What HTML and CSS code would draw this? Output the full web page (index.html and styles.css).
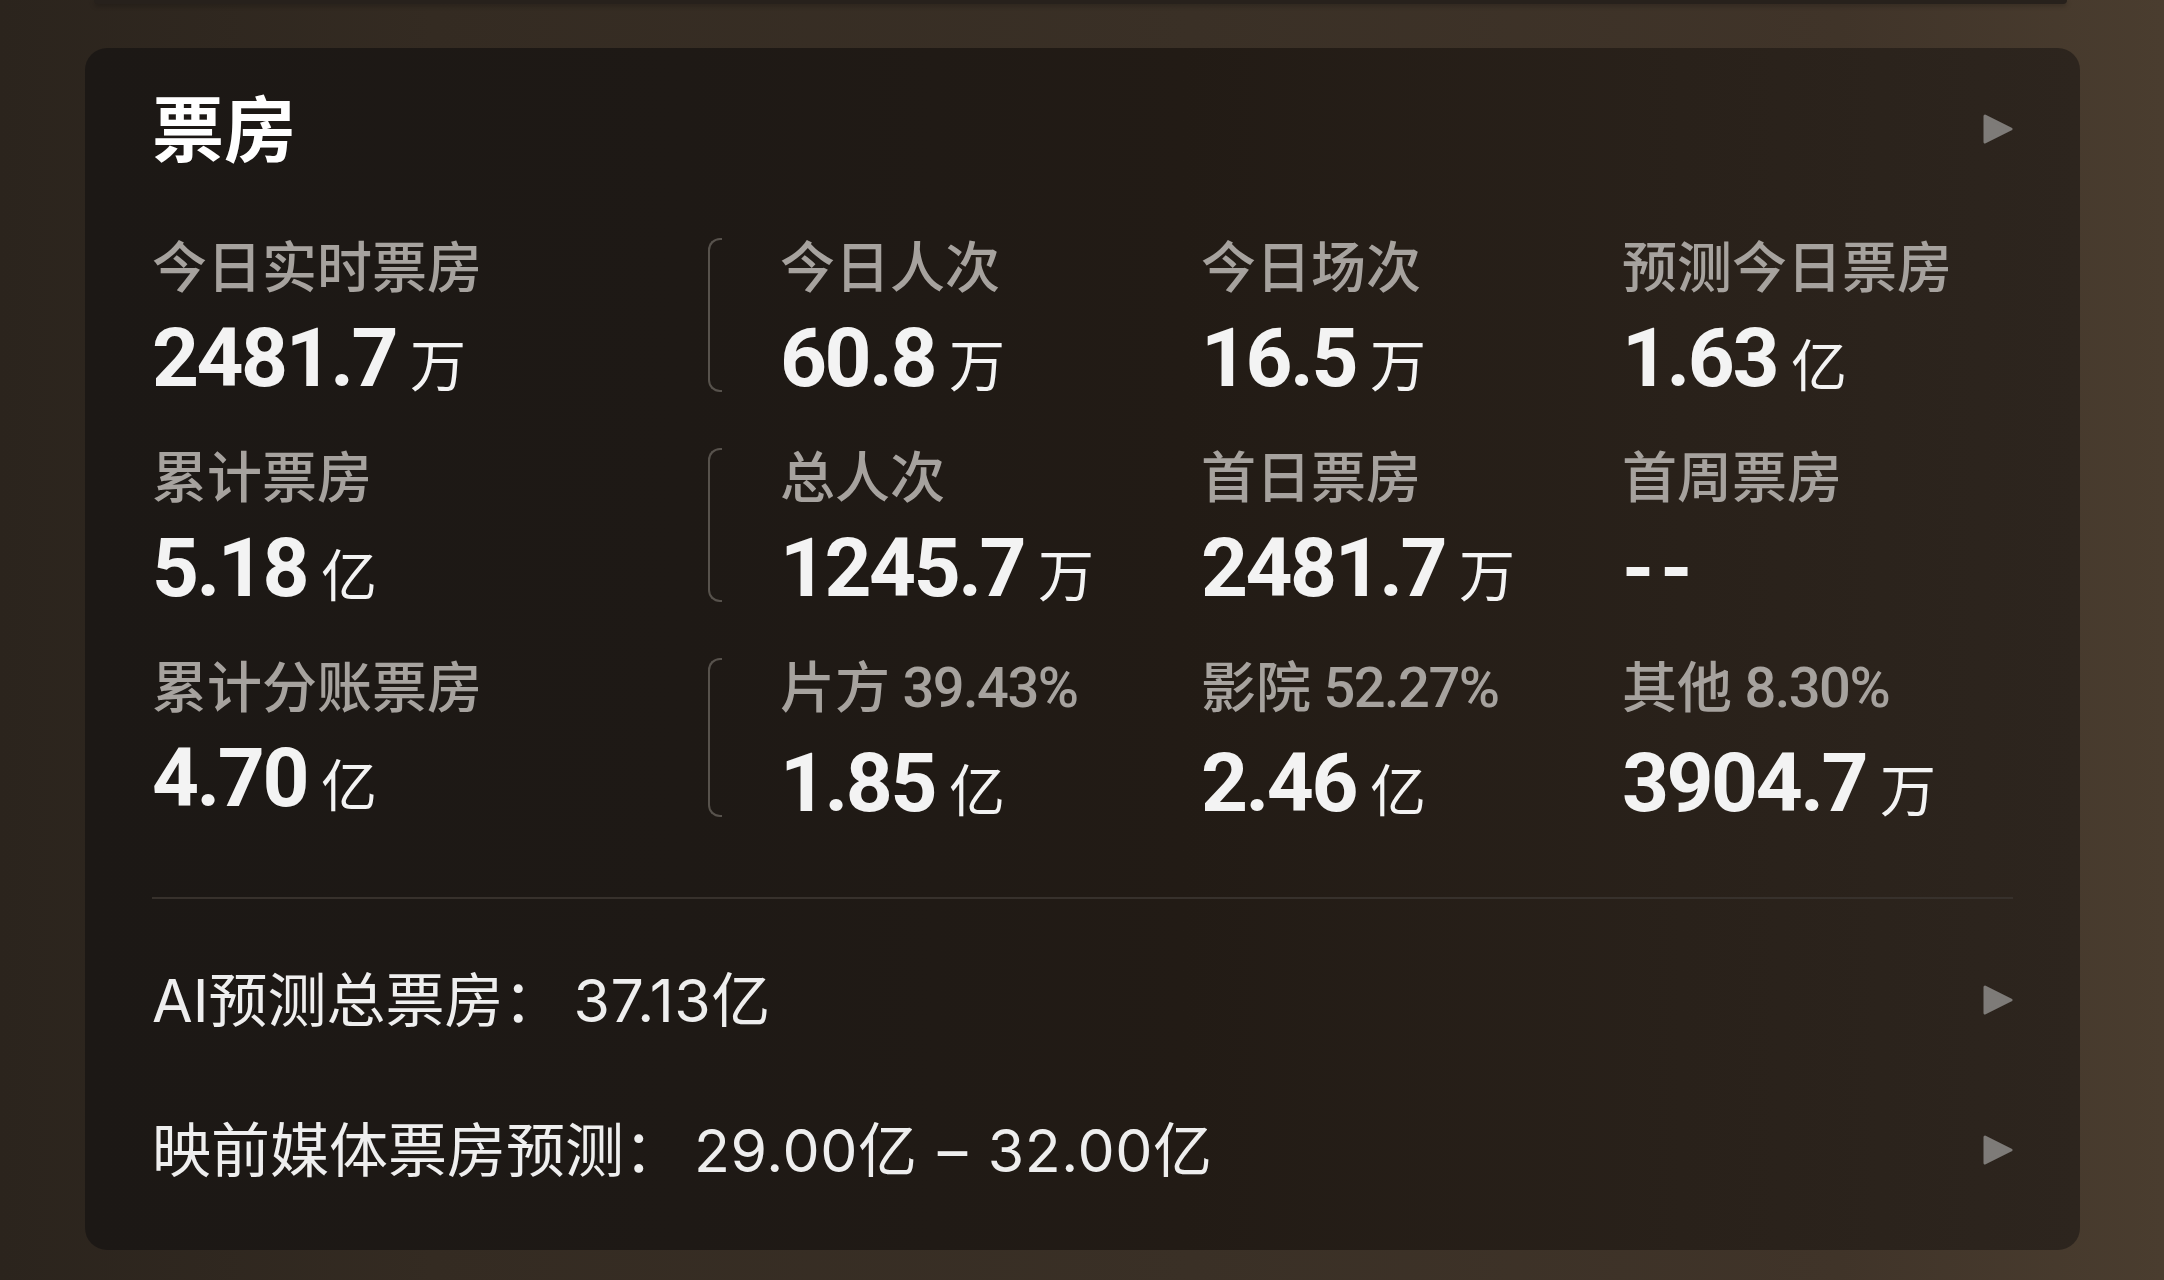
FILE: index.html
```html
<!DOCTYPE html>
<html lang="zh-CN">
<head>
<meta charset="utf-8">
<title>票房</title>
<link rel="stylesheet" href="styles.css">
</head>
<body>
<div class="page">
  <div class="prev-card"></div>

  <section class="card">
    <header class="card-head">
      <h2 class="card-title">票房</h2>
      <svg class="arrow arrow-head" viewBox="0 0 30 30" aria-hidden="true"><polygon points="2,2 28,15 2,28"/></svg>
    </header>

    <div class="stats">
      <div class="stat-row">
        <div class="stat">
          <div class="stat-label">今日实时票房</div>
          <div class="stat-value"><span class="num">2481.7</span><span class="unit">万</span></div>
        </div>
        <div class="stat-group">
          <div class="bracket"></div>
          <div class="stat">
            <div class="stat-label">今日人次</div>
            <div class="stat-value"><span class="num">60.8</span><span class="unit">万</span></div>
          </div>
          <div class="stat">
            <div class="stat-label">今日场次</div>
            <div class="stat-value"><span class="num">16.5</span><span class="unit">万</span></div>
          </div>
          <div class="stat">
            <div class="stat-label">预测今日票房</div>
            <div class="stat-value"><span class="num">1.63</span><span class="unit">亿</span></div>
          </div>
        </div>
      </div>

      <div class="stat-row">
        <div class="stat">
          <div class="stat-label">累计票房</div>
          <div class="stat-value"><span class="num">5.18</span><span class="unit">亿</span></div>
        </div>
        <div class="stat-group">
          <div class="bracket"></div>
          <div class="stat">
            <div class="stat-label">总人次</div>
            <div class="stat-value"><span class="num">1245.7</span><span class="unit">万</span></div>
          </div>
          <div class="stat">
            <div class="stat-label">首日票房</div>
            <div class="stat-value"><span class="num">2481.7</span><span class="unit">万</span></div>
          </div>
          <div class="stat">
            <div class="stat-label">首周票房</div>
            <div class="stat-value"><span class="num dash">--</span></div>
          </div>
        </div>
      </div>

      <div class="stat-row">
        <div class="stat">
          <div class="stat-label">累计分账票房</div>
          <div class="stat-value"><span class="num">4.70</span><span class="unit">亿</span></div>
        </div>
        <div class="stat-group">
          <div class="bracket"></div>
          <div class="stat">
            <div class="stat-label">片方 <span class="pct">39.43%</span></div>
            <div class="stat-value"><span class="num">1.85</span><span class="unit">亿</span></div>
          </div>
          <div class="stat">
            <div class="stat-label">影院 <span class="pct">52.27%</span></div>
            <div class="stat-value"><span class="num">2.46</span><span class="unit">亿</span></div>
          </div>
          <div class="stat">
            <div class="stat-label">其他 <span class="pct">8.30%</span></div>
            <div class="stat-value"><span class="num">3904.7</span><span class="unit">万</span></div>
          </div>
        </div>
      </div>
    </div>

    <div class="divider"></div>

    <div class="link-row">
      <span class="link-text">AI预测总票房：<span class="link-value">37.13亿</span></span>
      <svg class="arrow" viewBox="0 0 30 30" aria-hidden="true"><polygon points="2,2 28,15 2,28"/></svg>
    </div>
    <div class="link-row">
      <span class="link-text">映前媒体票房预测：<span class="link-value">29.00亿<span class="range-sep">–</span>32.00亿</span></span>
      <svg class="arrow" viewBox="0 0 30 30" aria-hidden="true"><polygon points="2,2 28,15 2,28"/></svg>
    </div>
  </section>
</div>
</body>
</html>
```

FILE: styles.css
```css
html, body {
  margin: 0;
  padding: 0;
}

body {
  height: 1280px;
  overflow: hidden;
  background: linear-gradient(90deg, #2b241d 0%, #342b22 20%, #3a3026 55%, #403429 85%, #4a3d2f 100%);
  font-family: "Noto Sans CJK SC", sans-serif;
  color: #f2f2f2;
}

.page {
  padding: 0 84px 0 85px;
}

/* bottom edge of the card above, scrolled mostly out of view */
.prev-card {
  height: 4px;
  margin: 0 13px 0 9px;
  background: #27211c;
  border-radius: 0 0 4px 4px;
  box-shadow: 0 2px 5px rgba(0, 0, 0, 0.25);
}

.card {
  margin-top: 44px;
  height: 1202px;
  box-sizing: border-box;
  padding: 40px 67px 26px 67px;
  border-radius: 22px;
  background: linear-gradient(90deg, #1c1815 0%, #1e1915 30%, #221b15 55%, #29211a 80%, #2d251e 100%);
}

.card-head {
  display: flex;
  justify-content: space-between;
  align-items: flex-start;
  height: 68px;
}

.card-title {
  margin: 1px 0 0 0;
  font-size: 72px;
  line-height: 1;
  font-weight: 700;
  color: #ffffff;
}

.arrow {
  width: 30px;
  height: 30px;
  flex: none;
}

.arrow polygon {
  fill: #7e7b78;
  stroke: #7e7b78;
  stroke-width: 3;
  stroke-linejoin: round;
}

.arrow-head {
  margin-top: 26px;
}

/* stat grid */
.stats {
  margin-top: 80px;
  display: flex;
  flex-direction: column;
  gap: 47px;
}

.stat-row {
  display: grid;
  grid-template-columns: 556px 1fr;
}

.stat-group {
  display: grid;
  grid-template-columns: 72px 421px 421px 1fr;
}

.bracket {
  width: 12px;
  margin-top: 2px;
  margin-bottom: 7px;
  border: 2px solid #57524c;
  border-right: none;
  border-radius: 12px 0 0 12px;
}

.stat-label {
  font-size: 55px;
  line-height: 1;
  font-weight: 500;
  color: #a6a29e;
  white-space: nowrap;
}

.pct {
  font-family: "Roboto", sans-serif;
  font-size: 56px;
  font-weight: 500;
  letter-spacing: -1.5px;
}

.stat-value {
  margin-top: 26px;
  font-family: "Roboto", sans-serif;
  font-size: 82px;
  line-height: 1;
  white-space: nowrap;
  color: #f3f3f3;
}

.num {
  font-weight: 700;
  letter-spacing: -2.5px;
}

.num.dash {
  letter-spacing: 6px;
}

.unit {
  margin-left: 14px;
  font-family: "Noto Sans CJK SC", sans-serif;
  font-size: 56px;
  font-weight: 400;
}

.divider {
  margin-top: 73px;
  height: 2px;
  background: #37312c;
  margin-bottom: 26px;
}

.link-row {
  height: 150px;
  display: flex;
  align-items: center;
  justify-content: space-between;
}

.link-text {
  font-family: "Inter", "Noto Sans CJK SC", sans-serif;
  font-size: 59px;
  line-height: 1;
  color: #eeeeee;
  white-space: nowrap;
}

.link-value {
  margin-left: 11px;
  letter-spacing: 0.6px;
}

.range-sep {
  margin: 0 20px;
}
```
